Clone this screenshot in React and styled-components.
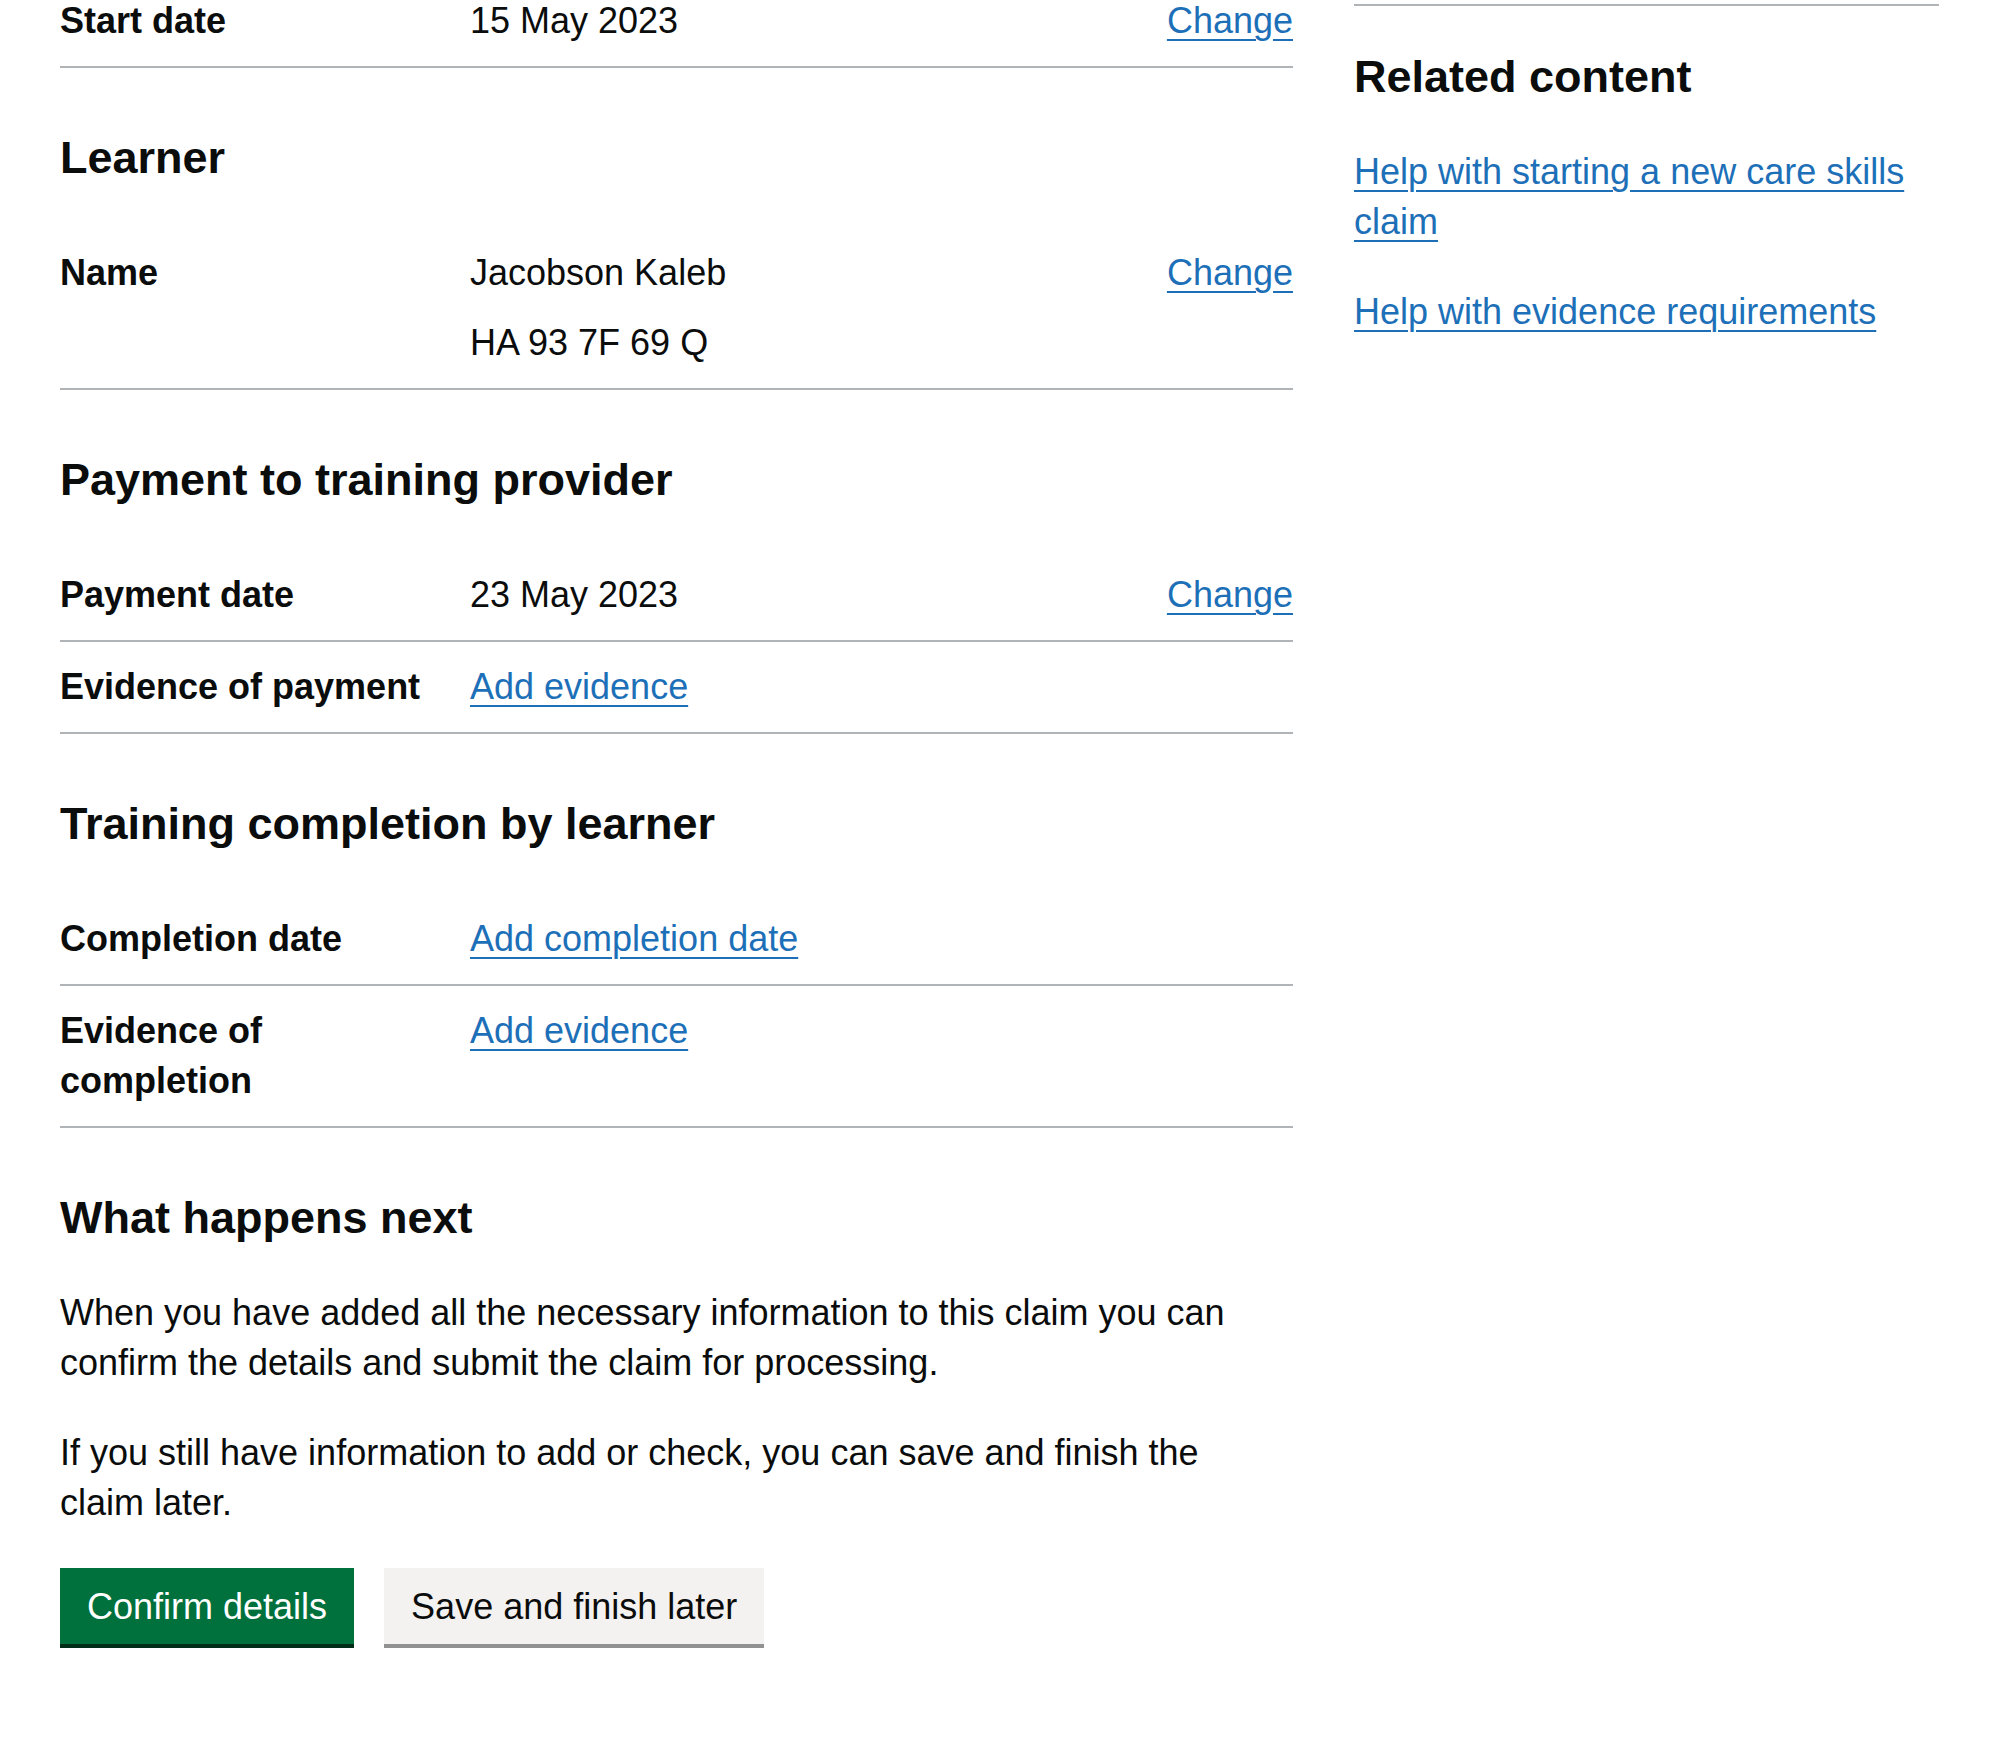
import React from "react";
import styled, { createGlobalStyle } from "styled-components";

const GlobalStyle = createGlobalStyle`
  html, body { margin: 0; padding: 0; background: #ffffff; }
  body {
    font-family: "Liberation Sans", Arial, sans-serif;
    color: #0b0c0c;
    -webkit-font-smoothing: antialiased;
  }
  * { box-sizing: border-box; }
`;

const Page = styled.div`
  display: flex;
  align-items: flex-start;
  gap: 61px;
  padding: 0 60px;
  width: 2000px;
`;

const Main = styled.main`
  width: 1233px;
  flex: none;
  margin-top: -24px; /* page is scrolled */
`;

const Aside = styled.aside`
  width: 585px;
  flex: none;
  margin-top: 4px;
  border-top: 2px solid #b1b4b6;
  padding-top: 41px;
`;

const Heading = styled.h2`
  font-size: 45px;
  line-height: 60px;
  font-weight: 700;
  margin: 0 0 40px;
`;

const SummaryList = styled.dl`
  margin: 0 0 60px;
  font-size: 36px;
  line-height: 50px;
`;

const Row = styled.div`
  display: grid;
  grid-template-columns: 410px 1fr auto;
  border-bottom: 2px solid #b1b4b6;
`;

const Key = styled.dt`
  font-weight: 700;
  padding: 20px 40px 20px 0;
`;

const Value = styled.dd`
  margin: 0;
  padding: 20px 40px 20px 0;
`;

const ValueLine = styled.p`
  margin: 0 0 20px;
  &:last-child { margin-bottom: 0; }
`;

const Actions = styled.dd`
  margin: 0;
  padding: 20px 0;
  text-align: right;
`;

const Link = styled.a`
  color: #1d70b8;
  text-decoration: underline;
  text-decoration-thickness: 2px;
  text-underline-offset: 6px;
  cursor: pointer;
`;

const Body = styled.p`
  font-size: 36px;
  line-height: 50px;
  margin: 0 0 40px;
  max-width: 1200px;
`;

const ButtonGroup = styled.div`
  display: flex;
  gap: 30px;
  align-items: flex-start;
`;

const Button = styled.button`
  appearance: none;
  font-family: "Liberation Sans", Arial, sans-serif;
  font-size: 36px;
  line-height: 38px;
  font-weight: 400;
  padding: 20px 27px 18px;
  border: none;
  border-bottom: 4px solid ${(p) => (p.$secondary ? "#929191" : "#002d18")};
  border-radius: 0;
  margin: 0;
  cursor: pointer;
  color: ${(p) => (p.$secondary ? "#0b0c0c" : "#ffffff")};
  background: ${(p) => (p.$secondary ? "#f3f2f1" : "#00703c")};
`;

const RelatedList = styled.ul`
  list-style: none;
  margin: 0;
  padding: 0;
  font-size: 36px;
  line-height: 50px;
`;

const RelatedItem = styled.li`
  margin: 0 0 40px;
`;

function SummaryRow({ label, values, action }) {
  return (
    <Row>
      <Key>{label}</Key>
      <Value>
        {values.map((v, i) =>
          typeof v === "string" ? <ValueLine key={i}>{v}</ValueLine> : <React.Fragment key={i}>{v}</React.Fragment>
        )}
      </Value>
      <Actions>{action ? <Link href="#">{action}</Link> : null}</Actions>
    </Row>
  );
}

export default function App() {
  return (
    <>
      <GlobalStyle />
      <Page>
        <Main>
          <SummaryList>
            <SummaryRow label="Start date" values={["15 May 2023"]} action="Change" />
          </SummaryList>

          <Heading>Learner</Heading>
          <SummaryList>
            <SummaryRow label="Name" values={["Jacobson Kaleb", "HA 93 7F 69 Q"]} action="Change" />
          </SummaryList>

          <Heading>Payment to training provider</Heading>
          <SummaryList>
            <SummaryRow label="Payment date" values={["23 May 2023"]} action="Change" />
            <SummaryRow label="Evidence of payment" values={[<Link href="#">Add evidence</Link>]} />
          </SummaryList>

          <Heading>Training completion by learner</Heading>
          <SummaryList>
            <SummaryRow label="Completion date" values={[<Link href="#">Add completion date</Link>]} />
            <SummaryRow label="Evidence of completion" values={[<Link href="#">Add evidence</Link>]} />
          </SummaryList>

          <Heading>What happens next</Heading>
          <Body>
            When you have added all the necessary information to this claim you can confirm the details and submit
            the claim for processing.
          </Body>
          <Body>
            If you still have information to add or check, you can save and finish the claim later.
          </Body>
          <ButtonGroup>
            <Button>Confirm details</Button>
            <Button $secondary>Save and finish later</Button>
          </ButtonGroup>
        </Main>

        <Aside>
          <Heading>Related content</Heading>
          <RelatedList>
            <RelatedItem>
              <Link href="#">Help with starting a new care skills claim</Link>
            </RelatedItem>
            <RelatedItem>
              <Link href="#">Help with evidence requirements</Link>
            </RelatedItem>
          </RelatedList>
        </Aside>
      </Page>
    </>
  );
}
